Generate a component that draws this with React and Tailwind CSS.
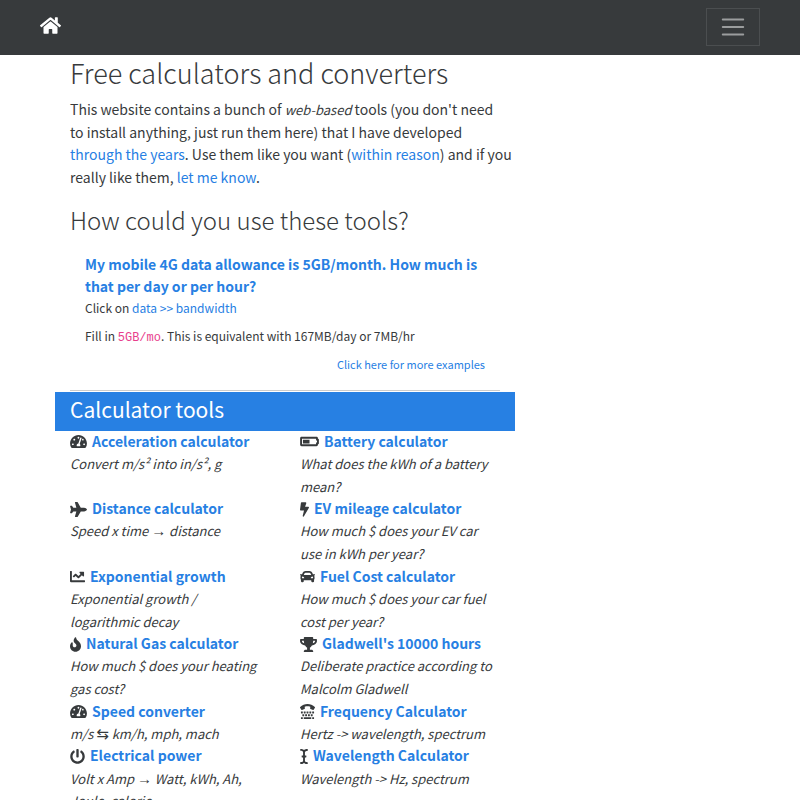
import React from "react";
import {
  FaHome,
  FaTachometerAlt,
  FaPlane,
  FaChartLine,
  FaFire,
  FaPowerOff,
  FaBatteryHalf,
  FaBolt,
  FaCar,
  FaTrophy,
  FaTty,
  FaICursor,
} from "react-icons/fa";

const tools = [
  { icon: FaTachometerAlt, size: "w-[17px]", name: "Acceleration calculator", text: "Convert m/s² into in/s², g" },
  { icon: FaBatteryHalf, size: "w-[19px]", name: "Battery calculator", text: "What does the kWh of a battery mean?" },
  { icon: FaPlane, size: "w-[17px]", name: "Distance calculator", text: "Speed x time → distance" },
  { icon: FaBolt, size: "w-[9px]", name: "EV mileage calculator", text: "How much $ does your EV car use in kWh per year?" },
  { icon: FaChartLine, size: "w-[15px]", name: "Exponential growth", text: "Exponential growth / logarithmic decay" },
  { icon: FaCar, size: "w-[15px]", name: "Fuel Cost calculator", text: "How much $ does your car fuel cost per year?" },
  { icon: FaFire, size: "w-[11px]", name: "Natural Gas calculator", text: "How much $ does your heating gas cost?" },
  { icon: FaTrophy, size: "w-[17px]", name: "Gladwell's 10000 hours", text: "Deliberate practice according to Malcolm Gladwell" },
  { icon: FaTachometerAlt, size: "w-[17px]", name: "Speed converter", text: "m/s ⇆ km/h, mph, mach" },
  { icon: FaTty, size: "w-[15px]", name: "Frequency Calculator", text: "Hertz -> wavelength, spectrum" },
  { icon: FaPowerOff, size: "w-[15px]", name: "Electrical power", text: "Volt x Amp → Watt, kWh, Ah, Joule, calorie" },
  { icon: FaICursor, size: "w-[8px]", name: "Wavelength Calculator", text: "Wavelength -> Hz, spectrum" },
];

function Link({ children, className = "" }) {
  return (
    <a href="#" className={`text-[#2780e3] ${className}`}>
      {children}
    </a>
  );
}

// Arrows come from a font with compact arrow glyphs.
function withArrows(text) {
  return text.split(/([→⇆])/).map((part, i) =>
    part === "→" || part === "⇆" ? (
      <span key={i} className="font-['Liberation_Sans','DejaVu_Sans',sans-serif] text-[15px] leading-none">
        {part}
      </span>
    ) : (
      part
    )
  );
}

function Tool({ icon: Icon, size, name, text }) {
  return (
    <div className="pl-[15px]">
      <div className="flex h-[22px] items-center gap-[5px]">
        <Icon className={`h-[15px] shrink-0 ${size}`} />
        <Link className="pb-0.5 font-bold">{name}</Link>
      </div>
      <p className="pr-5 text-[13px] leading-[1.75] italic">{withArrows(text)}</p>
    </div>
  );
}

export default function App() {
  return (
    <div className="h-screen overflow-hidden bg-white font-['Noto_Sans_CJK_SC','Noto_Sans',sans-serif] text-[14px] leading-[1.6] text-[#373a3c]">
      <nav className="flex h-[55px] items-start justify-between bg-[#373a3c] px-10 pt-2">
        <a href="#" aria-label="Home" className="flex h-[34px] items-center text-white">
          <FaHome className="h-[19px] w-[21px]" />
        </a>
        <button
          type="button"
          aria-label="Toggle navigation"
          className="flex h-[38px] w-[54px] items-center justify-center border border-white/10 text-white/50"
        >
          <svg viewBox="0 0 30 30" className="size-7" stroke="currentColor" strokeWidth="2" strokeLinecap="round">
            <path d="M4 7h22M4 15h22M4 23h22" />
          </svg>
        </button>
      </nav>

      <main className="mx-auto max-w-[720px] px-[15px]">
        <div className="w-2/3">
          <section className="px-[15px]">
            <h1 className="text-[27px] leading-9 font-light">Free calculators and converters</h1>
            <p className="mt-[7px] whitespace-nowrap">
              This website contains a bunch of <em className="text-[13px]">web-based</em> tools (you don't need
              <br />
              to install anything, just run them here) that I have developed
              <br />
              <Link>through the years</Link>. Use them like you want (<Link>within reason</Link>) and if you
              <br />
              really like them, <Link>let me know</Link>.
            </p>
            <h2 className="mt-[15px] text-[24px] leading-[34px] font-light">How could you use these tools?</h2>
            <div className="mt-4 px-[15px]">
              <h3 className="font-bold">
                <Link>My mobile 4G data allowance is 5GB/month. How much is that per day or per hour?</Link>
              </h3>
              <p className="text-[12px] leading-5">
                Click on <Link>data &gt;&gt; bandwidth</Link>
              </p>
              <p className="mt-2 text-[12px] leading-5">
                Fill in{" "}
                <code className="[font-family:'Liberation_Mono',monospace] text-[12px] text-[#e83e8c]">5GB/mo</code>.
                This is equivalent with 167MB/day or 7MB/hr
              </p>
              <p className="mt-1.5 text-right text-[11px] leading-5">
                <Link>Click here for more examples</Link>
              </p>
            </div>
            <hr className="mt-4 border-black/20" />
          </section>
          <section>
            <h2 className="mt-px h-[39px] bg-[#2780e3] px-[15px] text-[21px] leading-[34px] text-white">
              Calculator tools
            </h2>
            <div className="grid grid-cols-2">
              {tools.map((tool) => (
                <Tool key={tool.name} {...tool} />
              ))}
            </div>
          </section>
        </div>
      </main>
    </div>
  );
}
